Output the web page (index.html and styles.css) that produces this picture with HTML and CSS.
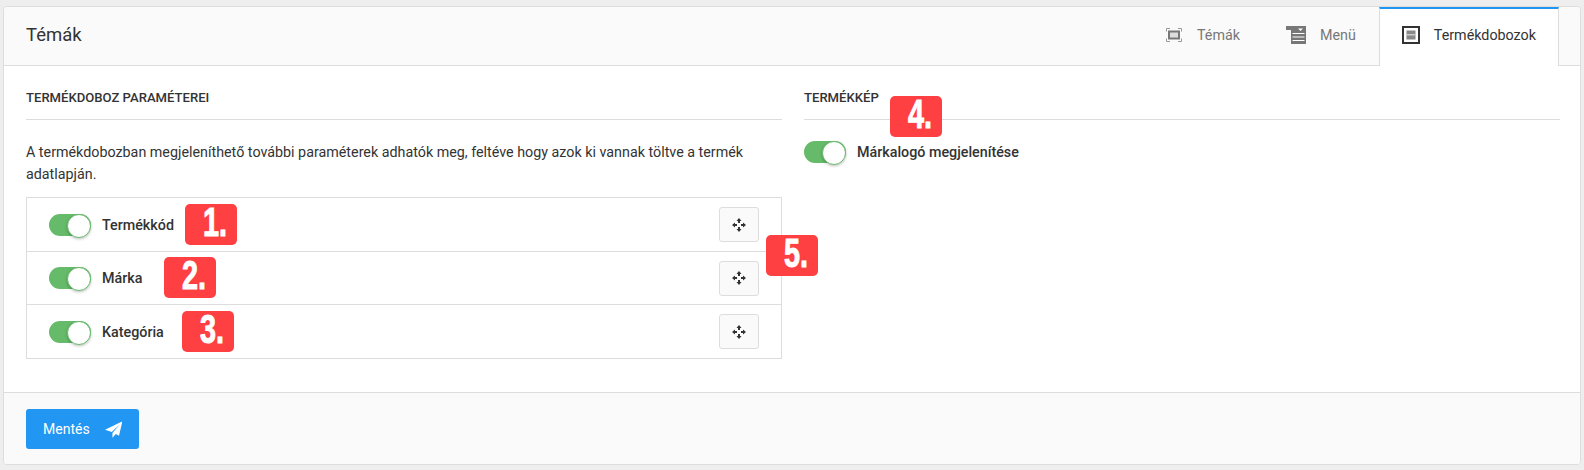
FILE: index.html
```html
<!DOCTYPE html>
<html lang="hu">
<head>
<meta charset="utf-8">
<title>Témák</title>
<link rel="stylesheet" href="styles.css">
</head>
<body>
<section class="card">
  <header class="card-head">
    <h1 class="card-title">Témák</h1>
    <nav class="tabs">
      <a class="tab">
        <svg class="tab-icon" width="16" height="14" viewBox="0 0 16 14"><path d="M.5 3.500V.5h3.500M12 .5h3.500v3M15.500 10.500v3H12M4 13.500H.5v-3" fill="none" stroke="#999" stroke-width="1"/><rect x="3" y="3.500" width="10" height="7" fill="#ddd" stroke="#777" stroke-width="2"/></svg>
        <span>Témák</span>
      </a>
      <a class="tab">
        <svg class="tab-icon" width="20" height="18" viewBox="0 0 20 18"><path d="M0 0h20v18H5V4H0z" fill="#777"/><path d="M6.500 7h12v1H6.500zM6.500 10.500h12v1h-12zM6.500 14h12v1h-12z" fill="#fff"/><path d="M12 2.500h5l-2.500 2.500z" fill="#fff"/></svg>
        <span>Menü</span>
      </a>
      <a class="tab is-active">
        <svg class="tab-icon" width="18" height="18" viewBox="0 0 18 18"><rect x="1" y="1" width="16" height="16" fill="none" stroke="#333" stroke-width="2"/><rect x="4.500" y="4.500" width="9" height="9" fill="#888"/><path d="M4.500 8h9v1.500h-9z" fill="#ccc"/></svg>
        <span>Termékdobozok</span>
      </a>
    </nav>
  </header>
  <div class="card-body">
    <div class="col">
      <h2 class="section-title">TERMÉKDOBOZ PARAMÉTEREI</h2>
      <p class="intro">A termékdobozban megjeleníthető további paraméterek adhatók meg, feltéve hogy azok ki vannak töltve a termék adatlapján.</p>
      <ul class="param-list">
        <li class="param"><span class="toggle"></span><span class="toggle-label">Termékkód</span><button class="move"><svg width="14" height="14" viewBox="0 0 14 14"><path d="M7 0l2.500 3H8v2H6V3H4.500zM7 14l-2.500-3H6V9h2v2h1.500zM0 7l3-2.500V6h2v2H3v1.500zM14 7l-3 2.500V8H9V6h2V4.500z" fill="#333"/></svg></button></li>
        <li class="param"><span class="toggle"></span><span class="toggle-label">Márka</span><button class="move"><svg width="14" height="14" viewBox="0 0 14 14"><path d="M7 0l2.500 3H8v2H6V3H4.500zM7 14l-2.500-3H6V9h2v2h1.500zM0 7l3-2.500V6h2v2H3v1.500zM14 7l-3 2.500V8H9V6h2V4.500z" fill="#333"/></svg></button></li>
        <li class="param"><span class="toggle"></span><span class="toggle-label">Kategória</span><button class="move"><svg width="14" height="14" viewBox="0 0 14 14"><path d="M7 0l2.500 3H8v2H6V3H4.500zM7 14l-2.500-3H6V9h2v2h1.500zM0 7l3-2.500V6h2v2H3v1.500zM14 7l-3 2.500V8H9V6h2V4.500z" fill="#333"/></svg></button></li>
      </ul>
    </div>
    <div class="col">
      <h2 class="section-title">TERMÉKKÉP</h2>
      <div class="logo-row"><span class="toggle"></span><span class="toggle-label">Márkalogó megjelenítése</span></div>
    </div>
  </div>
  <footer class="card-foot">
    <button class="save">Mentés<svg width="18" height="17" viewBox="0 0 18 17"><path d="M18 0L0 8.700l7 2.500L15.500 3 7.700 12v5l3.500-3.800 3.300 1.800z" fill="#fff"/></svg></button>
  </footer>
</section>
<span class="badge badge-1"><span class="badge-num">1.</span></span>
<span class="badge badge-2"><span class="badge-num">2.</span></span>
<span class="badge badge-3"><span class="badge-num">3.</span></span>
<span class="badge badge-4"><span class="badge-num">4.</span></span>
<span class="badge badge-5"><span class="badge-num">5.</span></span>
</body>
</html>
```
FILE: styles.css
```css
* { box-sizing: border-box; }
html, body { margin: 0; padding: 0; }
body {
  width: 1584px;
  height: 470px;
  overflow: hidden;
  background: #eeeeee;
  font-family: Roboto, "Liberation Sans", sans-serif;
  color: #333;
  font-size: 14px;
  position: relative;
  padding: 6px 3px 5px;
}
.card {
  height: 459px;
  background: #fff;
  border: 1px solid #ddd;
  border-radius: 4px;
  display: flex;
  flex-direction: column;
  overflow: hidden;
}
.card-head {
  height: 59px;
  flex: none;
  background: #fafafa;
  border-bottom: 1px solid #ddd;
  display: flex;
  justify-content: space-between;
  padding-left: 22px;
  padding-right: 21px;
}
.card-title {
  margin: 0;
  font-size: 18.500px;
  font-weight: 400;
  line-height: 56px;
}
.tabs { display: flex; height: 59px; }
.tab {
  display: flex;
  align-items: center;
  gap: 15px;
  padding: 0 23px 3px;
  font-size: 14.300px;
  color: #777;
  height: 58px;
}
.tab-icon { flex: none; }
.tab + .tab { gap: 14px; }
.tab.is-active {
  background: #fff;
  color: #333;
  height: 59px;
  border-top: 2px solid #2196f3;
  border-left: 1px solid #ddd;
  border-right: 1px solid #ddd;
  padding: 0 22px 5px;
}
.card-body {
  flex: 1;
  display: grid;
  grid-template-columns: 756px 756px;
  gap: 22px;
  padding: 0 22px;
}
.section-title {
  margin: 0;
  height: 54px;
  padding-top: 24px;
  border-bottom: 1px solid #ddd;
  font-size: 13.100px;
  font-weight: 500;
  line-height: 16px;
}
.intro {
  margin: 21px 0 12px;
  line-height: 22px;
  font-size: 14.300px;
  width: 745px;
}
.param-list {
  list-style: none;
  margin: 0;
  padding: 0;
  border: 1px solid #ddd;
}
.param {
  height: 53px;
  display: flex;
  align-items: center;
  padding: 0 22px;
  border-bottom: 1px solid #ddd;
}
.param:first-child { height: 54px; }
.param:last-child { border-bottom: 0; }
.toggle {
  width: 42px;
  height: 22px;
  border-radius: 11px;
  background: #66bb6a;
  position: relative;
  flex: none;
}
.toggle::after {
  content: "";
  position: absolute;
  right: 0;
  top: 0;
  width: 22px;
  height: 22px;
  border-radius: 50%;
  background: #fff;
  border: 1px solid #66bb6a;
  box-shadow: 0 1px 3px rgba(0,0,0,.25);
}
.toggle-label {
  margin-left: 11px;
  font-size: 14.300px;
  font-weight: 500;
}
.move {
  margin-left: auto;
  width: 40px;
  height: 35px;
  background: #fafafa;
  border: 1px solid #ddd;
  border-radius: 3px;
  padding: 0;
  display: flex;
  align-items: center;
  justify-content: center;
}
.logo-row {
  display: flex;
  align-items: center;
  margin-top: 21px;
}
.card-foot {
  height: 72px;
  flex: none;
  background: #fafafa;
  border-top: 1px solid #ddd;
  padding: 16px 22px;
}
.save {
  width: 113px;
  height: 40px;
  background: #2196f3;
  border: 0;
  border-radius: 3px;
  color: #fff;
  font: 400 14px Roboto, sans-serif;
  display: flex;
  align-items: center;
  gap: 15px;
  padding: 0 17px;
}
.badge {
  position: absolute;
  width: 52px;
  height: 41px;
  border-radius: 5px;
  background: #ff4043;
  color: #fff;
  font-family: "Liberation Sans", sans-serif;
  font-size: 40px;
  font-weight: 700;
  line-height: 37px;
  text-align: center;
}
.badge-num {
  display: block;
  transform: translateX(4px) scaleX(.72);
  -webkit-text-stroke: 1px #fff;
}
.badge-1 { left: 185px; top: 204px; }
.badge-2 { left: 164px; top: 257px; }
.badge-3 { left: 182px; top: 311px; }
.badge-4 { left: 890px; top: 96px; }
.badge-5 { left: 766px; top: 235px; }
```
